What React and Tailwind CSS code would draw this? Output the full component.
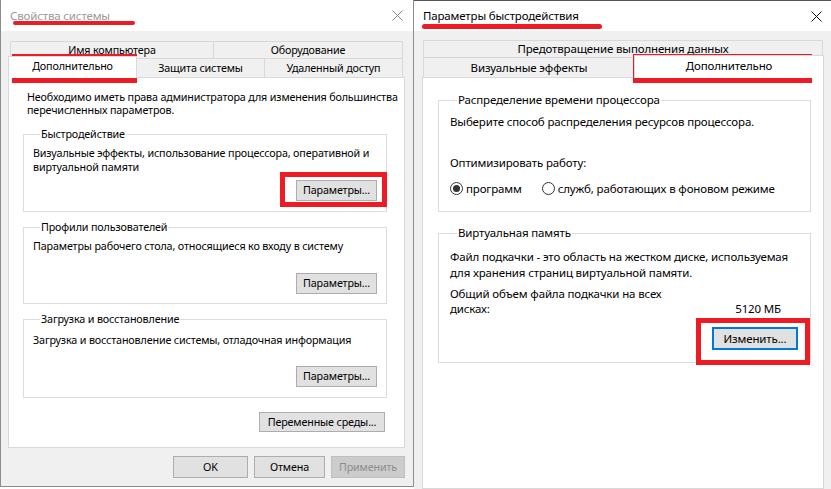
const Btn = ({ children, className = "" }) => (
  <div className={`flex items-center justify-center border border-[#adadad] bg-[#e1e1e1] text-black ${className}`}>
    {children}
  </div>
);

const Group = ({ title, className = "", children }) => (
  <fieldset className={`min-w-0 border border-[#dcdcdc] ${className}`}>
    <legend className="ml-[7px] px-[1px] leading-[14px]">{title}</legend>
    {children}
  </fieldset>
);

const Close = ({ color }) => (
  <svg width="11" height="11" viewBox="0 0 11 11">
    <path d="M0.5 0.5 L10.5 10.5 M10.5 0.5 L0.5 10.5" stroke={color} strokeWidth="1" />
  </svg>
);

const Radio = ({ checked }) => (
  <div className="w-[13px] h-[13px] rounded-full border border-[#333] bg-white flex items-center justify-center shrink-0">
    {checked && <div className="w-[7px] h-[7px] rounded-full bg-[#333]" />}
  </div>
);

function SystemProps() {
  return (
    <div className="w-[414px] h-[487px] shrink-0 flex flex-col border-l border-r border-b border-[#8c8c8c]">
      <div className="h-[31px] bg-white flex items-center justify-between pl-[9px] pr-[10px] text-[#999]">
        <span>Свойства системы</span>
        <Close color="#8a8a8a" />
      </div>
      <div className="flex-1 bg-[#f0f0f0] pl-[7px] pr-[8px] pt-[10px] flex flex-col text-[10.75px]">
        <div className="flex ml-[2px] h-[17px]">
          <div className="w-[203px] border-t border-l border-[#d9d9d9] flex items-center justify-center">Имя компьютера</div>
          <div className="w-[190px] border-t border-l border-r border-[#d9d9d9] flex items-center justify-center">Оборудование</div>
        </div>
        <div className="flex items-end h-[19px]">
          <div className="relative z-10 -mb-px w-[129px] h-[22px] bg-white border-t border-l border-r border-[#d9d9d9] flex items-center justify-center pb-[2px]">
            Дополнительно
          </div>
          <div className="w-[127px] h-[19px] border-t border-[#d9d9d9] flex items-center justify-center">Защита системы</div>
          <div className="w-[139px] h-[19px] border-t border-l border-r border-[#d9d9d9] flex items-center justify-center">Удаленный доступ</div>
        </div>
        <div className="h-[371px] bg-white border border-[#d9d9d9] flex flex-col">
          <div className="pl-[18px] pt-[13px] leading-[13px]">
            <p>Необходимо иметь права администратора для изменения большинства</p>
            <p>перечисленных параметров.</p>
          </div>
          <Group title="Быстродействие" className="mt-[10px] ml-[14px] mr-[17px] pl-[9px] pr-[9px] pb-[10px]">
            <div className="pt-[5px] leading-[14px]">
              <p>Визуальные эффекты, использование процессора, оперативной и</p>
              <p>виртуальной памяти</p>
            </div>
            <div className="flex justify-end mt-[6px]">
              <Btn className="w-[81px] h-[21px]">Параметры...</Btn>
            </div>
          </Group>
          <Group title="Профили пользователей" className="mt-[8px] ml-[14px] mr-[17px] pl-[9px] pr-[9px] pb-[9px]">
            <p className="pt-[5px] leading-[14px]">Параметры рабочего стола, относящиеся ко входу в систему</p>
            <div className="flex justify-end mt-[20px]">
              <Btn className="w-[81px] h-[21px]">Параметры...</Btn>
            </div>
          </Group>
          <Group title="Загрузка и восстановление" className="mt-[8px] ml-[14px] mr-[17px] pl-[9px] pr-[9px] pb-[10px]">
            <p className="pt-[7px] leading-[14px]">Загрузка и восстановление системы, отладочная информация</p>
            <div className="flex justify-end mt-[19px]">
              <Btn className="w-[81px] h-[21px]">Параметры...</Btn>
            </div>
          </Group>
          <div className="flex justify-end mt-[14px] mr-[19px]">
            <Btn className="w-[126px] h-[20px]">Переменные среды...</Btn>
          </div>
        </div>
        <div className="flex justify-end gap-[6px] mt-[8px]">
          <Btn className="w-[75px] h-[22px]">OK</Btn>
          <Btn className="w-[71px] h-[22px]">Отмена</Btn>
          <div className="w-[74px] h-[22px] flex items-center justify-center border border-[#bfbfbf] bg-[#cccccc] text-[#8c8c8c]">
            Применить
          </div>
        </div>
      </div>
    </div>
  );
}

function PerfOptions() {
  return (
    <div className="flex-1 h-[489px] flex flex-col border-t border-[#555]">
      <div className="h-[30px] bg-white flex items-center justify-between pl-[9px] pr-[9px] text-black">
        <span>Параметры быстродействия</span>
        <Close color="#111" />
      </div>
      <div className="flex-1 bg-[#f0f0f0] pl-[8px] pt-[9px] flex flex-col">
        <div className="flex ml-[1px] h-[17px]">
          <div className="w-[400px] border-t border-l border-r border-[#d9d9d9] flex items-center justify-center">
            Предотвращение выполнения данных
          </div>
        </div>
        <div className="flex items-end h-[20px] ml-[1px]">
          <div className="w-[211px] h-[20px] border-t border-l border-[#d9d9d9] flex items-center justify-center">Визуальные эффекты</div>
          <div className="relative z-10 -mb-px w-[190px] h-[23px] bg-white border-t border-l border-r border-[#d9d9d9] flex items-center justify-center pb-[3px]">
            Дополнительно
          </div>
        </div>
        <div className="w-[402px] flex-1 bg-white border border-[#d9d9d9] flex flex-col">
          <Group title="Распределение времени процессора" className="mt-[15px] ml-[15px] mr-[12px] pl-[11px] pb-[15px]">
            <p className="pt-[7px] leading-[15px]">Выберите способ распределения ресурсов процессора.</p>
            <p className="mt-[26px] leading-[15px]">Оптимизировать работу:</p>
            <div className="mt-[11px] h-[15px] flex items-center">
              <Radio checked />
              <span className="ml-[3px]">программ</span>
              <div className="ml-[20px]">
                <Radio />
              </div>
              <span className="ml-[3px]">служб, работающих в фоновом режиме</span>
            </div>
          </Group>
          <Group title="Виртуальная память" className="mt-[14px] ml-[15px] mr-[12px] pl-[11px] pr-[12px] pb-[12px]">
            <div className="pt-[9px] leading-[16px]">
              <p>Файл подкачки - это область на жестком диске, используемая</p>
              <p>для хранения страниц виртуальной памяти.</p>
            </div>
            <div className="mt-[5px] leading-[15px]">
              <p>Общий объем файла подкачки на всех</p>
              <div className="flex justify-between pr-[17px]">
                <span>дисках:</span>
                <span>5120 МБ</span>
              </div>
            </div>
            <div className="flex justify-end mt-[11px]">
              <div className="w-[86px] h-[23px] border-2 border-[#0078d7] bg-[#e1e1e1] flex items-center justify-center">
                Изменить...
              </div>
            </div>
          </Group>
        </div>
      </div>
    </div>
  );
}

export default function App() {
  return (
    <div className="relative w-[831px] h-[489px] overflow-hidden bg-white flex text-[11.5px] tracking-[-0.15px] whitespace-nowrap text-black font-['Noto_Sans',sans-serif]">
      <SystemProps />
      <PerfOptions />
      <div className="absolute left-[13px] top-[21px] w-[122px] h-[4px] rounded-full bg-[#ed1c24]" />
      <div className="absolute left-[422px] top-[24px] w-[180px] h-[5px] rounded-full bg-[#ed1c24]" />
      <div className="absolute left-[12px] top-[54px] w-[125px] h-[29px] border-[5px] border-[#ed1c24]" />
      <div className="absolute left-[280px] top-[172px] w-[107px] h-[35px] border-[5px] border-[#ed1c24]" />
      <div className="absolute left-[633px] top-[54px] w-[179px] h-[29px] border-[5px] border-[#ed1c24]" />
      <div className="absolute left-[696px] top-[318px] w-[114px] h-[47px] border-[5px] border-[#ed1c24]" />
    </div>
  );
}
